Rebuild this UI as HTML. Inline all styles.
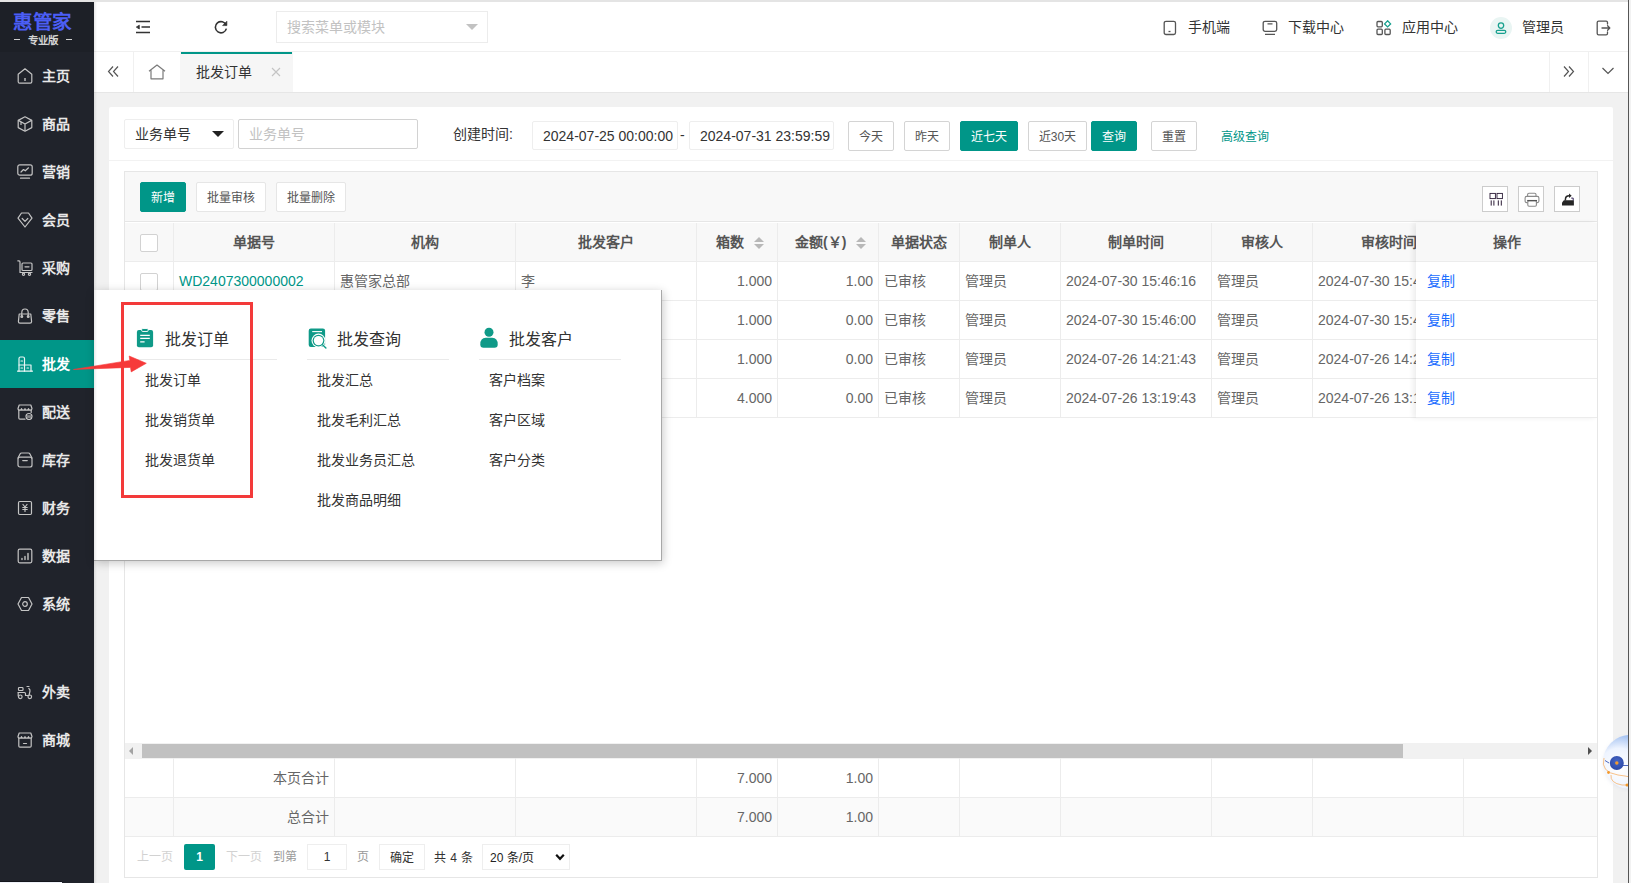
<!DOCTYPE html>
<html lang="zh-CN">
<head>
<meta charset="utf-8">
<style>
*{box-sizing:border-box;margin:0;padding:0}
html,body{width:1631px;height:883px;overflow:hidden;background:#f1f1f1;font-family:"Liberation Sans",sans-serif;font-size:14px;color:#666;position:relative}
.a{position:absolute;white-space:nowrap}
svg{display:block}
#topline{left:0;top:0;width:1631px;height:2px;background:#e4e4e4}
#side{left:0;top:2px;width:94px;height:881px;background:#20232b}
#logo{left:0;top:0;width:94px;height:50px;background:#1d2027}
.mi{position:absolute;left:0;width:94px;height:48px;color:#e8e8e8;font-weight:bold}
.mi.on{background:#009688;color:#fff}
.mi .ic{position:absolute;left:17px;top:16px;width:16px;height:16px}
.mi .tx{position:absolute;left:42px;top:0;line-height:48px;font-size:14px}
#hdr{left:94px;top:2px;width:1534px;height:50px;background:#fff;border-bottom:1px solid #f0f0f0}
#tabs{left:94px;top:52px;width:1534px;height:41px;background:#fff;border-bottom:1px solid #e6e6e6}
.btn{top:121px;height:30px;border:1px solid #d4d4d4;background:#fff;color:#555;font-size:12px;line-height:30px;text-align:center;border-radius:2px}
.btn.pri{background:#009688;border-color:#009688;color:#fff}
.tbtn{top:182px;height:30px;border:1px solid #e6e6e6;background:#fff;color:#555;font-size:12px;line-height:31px;text-align:center;border-radius:2px}
.tbtn.pri{background:#009688;border-color:#009688;color:#fff}
.ibox{top:186px;width:26px;height:26px;border:1px solid #ccc;background:#fff}
.ibox svg{position:absolute;left:0;top:0}
.th{top:223px;height:38px;line-height:38px;text-align:center;font-weight:bold;color:#555;font-size:14px}
.td{height:38px;line-height:38px;font-size:14px;color:#666}
.chk{width:18px;height:18px;border:1px solid #d2d2d2;border-radius:2px;background:#fff}
.pg{top:844px;line-height:26px;font-size:12px}
.pt{top:326px;line-height:28px;font-size:16px;color:#333}
.pi{line-height:20px;font-size:14px;color:#333}
</style>
</head>
<body>
<div id="topline" class="a"></div>
<!-- SIDEBAR -->
<div id="side" class="a">
  <div id="logo" class="a">
    <div class="a" style="left:13px;top:9px;width:62px;height:22px;color:#4b5ef6;font-weight:900;font-size:19.5px;line-height:22px;letter-spacing:-0.5px;white-space:nowrap">惠管家</div>
    <div class="a" style="left:13px;top:32px;width:60px;height:12px;color:#d4d4d4;font-size:10.5px;line-height:12px;text-align:center;font-weight:bold">专业版</div>
    <div class="a" style="left:14px;top:37px;width:6px;height:1px;background:#cfcfcf"></div>
    <div class="a" style="left:66px;top:37px;width:6px;height:1px;background:#cfcfcf"></div>
  </div>
</div>
<div class="mi a" style="top:52px"><svg class="ic" viewBox="0 0 16 16" fill="none" stroke="#c4c4c4" stroke-width="1.2" stroke-linejoin="round"><path d="M1.2 6.3 L8 0.8 L14.8 6.3 V13.8 Q14.8 15.2 13.4 15.2 H2.6 Q1.2 15.2 1.2 13.8 Z"/><path d="M8 10 V13" stroke-width="1.4"/></svg><span class="tx">主页</span></div>
<div class="mi a" style="top:100px"><svg class="ic" viewBox="0 0 16 16" fill="none" stroke="#c4c4c4" stroke-width="1.2" stroke-linejoin="round"><path d="M8 0.8 L14.8 4.4 V11.6 L8 15.2 L1.2 11.6 V4.4 Z"/><path d="M1.4 4.4 L8 8 L14.6 4.4 M8 8 V15 M4 6 V9"/></svg><span class="tx">商品</span></div>
<div class="mi a" style="top:148px"><svg class="ic" viewBox="0 0 16 16" fill="none" stroke="#c4c4c4" stroke-width="1.2" stroke-linejoin="round" stroke-linecap="round"><rect x="0.8" y="0.8" width="14.4" height="10.4" rx="2"/><path d="M4 8 L6.5 5.5 L8.3 6.8 L11.5 3.8 M3.5 14.2 H12.5"/></svg><span class="tx">营销</span></div>
<div class="mi a" style="top:196px"><svg class="ic" viewBox="0 0 16 16" fill="none" stroke="#c4c4c4" stroke-width="1.2" stroke-linejoin="round" stroke-linecap="round"><path d="M4.5 1 H11.5 L15 6.2 L8 15 L1 6.2 Z"/><path d="M5.2 6.5 L8 9.3 L10.8 6.5"/></svg><span class="tx">会员</span></div>
<div class="mi a" style="top:244px"><svg class="ic" viewBox="0 0 16 16" fill="none" stroke="#c4c4c4" stroke-width="1.2" stroke-linejoin="round" stroke-linecap="round"><path d="M0.8 0.8 H2 Q3 0.8 3 2 V12.5 H15"/><rect x="5" y="3" width="10" height="7.5" rx="1"/><path d="M8 6.8 H12"/><circle cx="6.5" cy="14.3" r="1.1"/><circle cx="12.5" cy="14.3" r="1.1"/></svg><span class="tx">采购</span></div>
<div class="mi a" style="top:292px"><svg class="ic" viewBox="0 0 16 16" fill="none" stroke="#c4c4c4" stroke-width="1.2" stroke-linejoin="round" stroke-linecap="round"><path d="M2.2 6 H13.8 L14.6 13.6 Q14.6 15.2 13 15.2 H3 Q1.4 15.2 1.4 13.6 Z"/><path d="M4.8 8.5 V4.6 Q4.8 1 8 1 Q11.2 1 11.2 4.6 V8.5"/><circle cx="4.8" cy="8.6" r="0.9"/><circle cx="11.2" cy="8.6" r="0.9"/></svg><span class="tx">零售</span></div>
<div class="mi on a" style="top:340px"><svg class="ic" viewBox="0 0 16 16" fill="none" stroke="#e8f6f4" stroke-width="1.2" stroke-linejoin="round" stroke-linecap="round"><path d="M0.5 15.2 H15.5"/><path d="M2 15.2 V2.5 Q2 1 3.5 1 H6 Q7.5 1 7.5 2.5 V15.2"/><path d="M7.5 9 H14 V15.2 M2 9 H7.5"/><path d="M4 5 H5.5 M4 12 H5.5 M10 12 H11.5"/></svg><span class="tx">批发</span></div>
<div class="mi a" style="top:388px"><svg class="ic" viewBox="0 0 16 16" fill="none" stroke="#c4c4c4" stroke-width="1.2" stroke-linejoin="round" stroke-linecap="round"><path d="M1 4.5 L2.2 1 H13.8 L15 4.5 Q15 6.2 13.2 6.2 Q11.5 6.2 11.5 4.6 Q11.5 6.2 9.7 6.2 Q8 6.2 8 4.6 Q8 6.2 6.3 6.2 Q4.5 6.2 4.5 4.6 Q4.5 6.2 2.8 6.2 Q1 6.2 1 4.5 Z"/><path d="M1.8 6.2 V14 Q1.8 15.2 3 15.2 H8"/><path d="M14.2 6.2 V8.5"/><circle cx="12" cy="12.5" r="3"/><path d="M11 11.5 V13.5 M13 11.5 V13.5"/></svg><span class="tx">配送</span></div>
<div class="mi a" style="top:436px"><svg class="ic" viewBox="0 0 16 16" fill="none" stroke="#c4c4c4" stroke-width="1.2" stroke-linejoin="round" stroke-linecap="round"><path d="M1 6 L3.2 1.8 Q3.6 1 4.5 1 H11.5 Q12.4 1 12.8 1.8 L15 6"/><rect x="1" y="5.2" width="14" height="9.8" rx="2"/><path d="M5.8 8.6 H10.2" stroke-width="1.4"/></svg><span class="tx">库存</span></div>
<div class="mi a" style="top:484px"><svg class="ic" viewBox="0 0 16 16" fill="none" stroke="#c4c4c4" stroke-width="1.2" stroke-linejoin="round" stroke-linecap="round"><rect x="1.5" y="1.5" width="13" height="13" rx="1.2"/><path d="M6 4.5 L8 7 L10 4.5 M8 7 V11.5 M5.8 7.5 H10.2 M5.8 9.5 H10.2"/></svg><span class="tx">财务</span></div>
<div class="mi a" style="top:532px"><svg class="ic" viewBox="0 0 16 16" fill="none" stroke="#c4c4c4" stroke-width="1.2" stroke-linejoin="round" stroke-linecap="round"><rect x="1.2" y="1.2" width="13.6" height="13.6" rx="1.5"/><path d="M5 11.5 V10.5 M8 11.5 V8.5 M11 11.5 V5.5" stroke-width="1.4"/></svg><span class="tx">数据</span></div>
<div class="mi a" style="top:580px"><svg class="ic" viewBox="0 0 16 16" fill="none" stroke="#c4c4c4" stroke-width="1.2" stroke-linejoin="round"><path d="M4.5 1.5 H11.5 L15 8 L11.5 14.5 H4.5 L1 8 Z"/><circle cx="8" cy="8" r="2.3"/></svg><span class="tx">系统</span></div>
<div class="mi a" style="top:668px"><svg class="ic" viewBox="0 0 16 16" fill="none" stroke="#c4c4c4" stroke-width="1.2" stroke-linejoin="round" stroke-linecap="round"><rect x="1.5" y="3.5" width="4.5" height="3" rx="0.8"/><path d="M1 8.5 H7.5 Q8.5 8.5 8.5 9.5 V11.5 H12 L13 7 Q13.2 5.5 11.8 4.5 M10 2.5 H12"/><circle cx="3.3" cy="12.8" r="1.8"/><circle cx="12.8" cy="12.8" r="1.8"/><path d="M1.2 12 V9"/></svg><span class="tx">外卖</span></div>
<div class="mi a" style="top:716px"><svg class="ic" viewBox="0 0 16 16" fill="none" stroke="#c4c4c4" stroke-width="1.2" stroke-linejoin="round" stroke-linecap="round"><path d="M1 4.5 L2.2 1 H13.8 L15 4.5 Q15 6.2 13.2 6.2 Q11.5 6.2 11.5 4.6 Q11.5 6.2 9.7 6.2 Q8 6.2 8 4.6 Q8 6.2 6.3 6.2 Q4.5 6.2 4.5 4.6 Q4.5 6.2 2.8 6.2 Q1 6.2 1 4.5 Z"/><path d="M1.8 6.2 V14 Q1.8 15.2 3 15.2 H13 Q14.2 15.2 14.2 14 V6.2"/><path d="M6.5 11.5 H9.5"/></svg><span class="tx">商城</span></div>
<div class="a" style="left:0;top:881px;width:62px;height:1px;background:#13151b"></div><div class="a" style="left:0;top:882px;width:62px;height:1px;background:#eef1f8"></div>

<!-- HEADER -->
<div id="hdr" class="a"></div>
<svg class="a" style="left:135px;top:20px" width="16" height="14" viewBox="0 0 16 14" fill="none" stroke="#333" stroke-width="1.5"><path d="M1 1.6 H15 M1 12.6 H15 M6.5 7.1 H15"/><path d="M1.3 7.1 L4.3 5.2 V9 Z" fill="#333" stroke-width="0.8"/></svg>
<svg class="a" style="left:214px;top:20px" width="14" height="14" viewBox="0 0 14 14" fill="none" stroke="#333" stroke-width="1.6"><path d="M12.2 5.2 A5.6 5.6 0 1 0 12.4 8.6"/><path d="M12.9 1.2 V5.6 H8.6 Z" fill="#333" stroke-width="0.6"/></svg>
<div class="a" style="left:276px;top:11px;width:212px;height:32px;border:1px solid #ececec;background:#fff"></div>
<div class="a" style="left:287px;top:11px;height:32px;line-height:32px;color:#c2c2c2;font-size:14px">搜索菜单或模块</div>
<div class="a" style="left:466px;top:24px;width:0;height:0;border-left:6px solid transparent;border-right:6px solid transparent;border-top:6px solid #c2c2c2"></div>

<svg class="a" style="left:1163px;top:20px" width="14" height="16" viewBox="0 0 14 16" fill="none" stroke="#555" stroke-width="1.3"><rect x="1.2" y="1.3" width="11.3" height="13.2" rx="1.8"/><path d="M5.5 11.5 H7.5"/></svg>
<div class="a" style="left:1188px;top:12px;line-height:30px;color:#333;font-size:14px">手机端</div>
<svg class="a" style="left:1262px;top:20px" width="16" height="16" viewBox="0 0 16 16" fill="none" stroke="#555" stroke-width="1.3"><rect x="1.2" y="1.3" width="13.5" height="10" rx="1.8"/><path d="M5.5 3.8 H10.5 M3 14.3 H13" /></svg>
<div class="a" style="left:1288px;top:12px;line-height:30px;color:#333;font-size:14px">下载中心</div>
<svg class="a" style="left:1376px;top:20px" width="16" height="16" viewBox="0 0 16 16" fill="none" stroke="#555" stroke-width="1.3"><rect x="1" y="1.5" width="5.3" height="5.3" rx="1"/><rect x="1" y="9.2" width="5.3" height="5.3" rx="1"/><rect x="8.9" y="9.2" width="5.3" height="5.3" rx="1"/><path d="M11.6 0.8 L14.6 3.9 L11.6 6.9 L8.6 3.9 Z" stroke="#16a08e"/></svg>
<div class="a" style="left:1402px;top:12px;line-height:30px;color:#333;font-size:14px">应用中心</div>
<div class="a" style="left:1490px;top:17px;width:22px;height:22px;border-radius:11px;background:#e9f5f3"></div>
<svg class="a" style="left:1494px;top:21px" width="14" height="14" viewBox="0 0 14 14" fill="none" stroke="#16a08e" stroke-width="1.3"><circle cx="7" cy="4.6" r="2.7"/><rect x="2.2" y="9.3" width="9.6" height="3" rx="1.5"/></svg>
<div class="a" style="left:1522px;top:12px;line-height:30px;color:#333;font-size:14px">管理员</div>
<svg class="a" style="left:1596px;top:20px" width="15" height="16" viewBox="0 0 15 16" fill="none" stroke="#555" stroke-width="1.3" stroke-linejoin="round" stroke-linecap="round"><path d="M11.5 4 V2.6 Q11.5 1.2 10.1 1.2 H2.6 Q1.2 1.2 1.2 2.6 V13.4 Q1.2 14.8 2.6 14.8 H10.1 Q11.5 14.8 11.5 13.4 V12"/><path d="M6 8 H13.6 M11.6 5.8 L13.8 8 L11.6 10.2"/></svg>

<!-- TABS -->
<div id="tabs" class="a"></div>
<div class="a" style="left:133px;top:52px;width:1px;height:40px;background:#f0f0f0"></div>
<svg class="a" style="left:107px;top:65px" width="13" height="13" viewBox="0 0 13 13" fill="none" stroke="#555" stroke-width="1.2"><path d="M6 1.5 L1.5 6.5 L6 11.5 M11 1.5 L6.5 6.5 L11 11.5"/></svg>
<svg class="a" style="left:148px;top:64px" width="18" height="16" viewBox="0 0 18 16" fill="none" stroke="#7a7a7a" stroke-width="1.2" stroke-linejoin="round"><path d="M1 7.2 L9 1 L17 7.2 M3 5.8 V14.8 H15 V5.8"/></svg>
<div class="a" style="left:180px;top:52px;width:113px;height:40px;background:#f6f6f6"></div>
<div class="a" style="left:181px;top:52px;width:111px;height:2px;background:#009688"></div>
<div class="a" style="left:196px;top:54px;line-height:36px;color:#333;font-size:14px">批发订单</div>
<svg class="a" style="left:271px;top:67px" width="10" height="10" viewBox="0 0 10 10" fill="none" stroke="#c4c4c4" stroke-width="1.1"><path d="M1 1 L9 9 M9 1 L1 9"/></svg>
<div class="a" style="left:1549px;top:52px;width:1px;height:40px;background:#f0f0f0"></div>
<div class="a" style="left:1588px;top:52px;width:1px;height:40px;background:#f0f0f0"></div>
<svg class="a" style="left:1562px;top:65px" width="13" height="13" viewBox="0 0 13 13" fill="none" stroke="#555" stroke-width="1.2"><path d="M2 1.5 L6.5 6.5 L2 11.5 M7 1.5 L11.5 6.5 L7 11.5"/></svg>
<svg class="a" style="left:1601px;top:66px" width="14" height="10" viewBox="0 0 14 10" fill="none" stroke="#555" stroke-width="1.2"><path d="M1.5 2 L7 7.5 L12.5 2"/></svg>

<!-- CONTENT CARD -->
<div class="a" style="left:109px;top:107px;width:1504px;height:790px;background:#fff;border-radius:2px"></div>
<div class="a" style="left:109px;top:160px;width:1504px;height:1px;background:#f2f2f2"></div>
<!-- filter row -->
<div class="a" style="left:124px;top:119px;width:110px;height:30px;border:1px solid #eee;background:#fff;border-radius:2px"></div>
<div class="a" style="left:135px;top:119px;line-height:30px;color:#333;font-size:14px">业务单号</div>
<div class="a" style="left:212px;top:131px;width:0;height:0;border-left:6px solid transparent;border-right:6px solid transparent;border-top:6.5px solid #222"></div>
<div class="a" style="left:238px;top:119px;width:180px;height:30px;border:1px solid #d2d2d2;background:#fff;border-radius:2px"></div>
<div class="a" style="left:249px;top:119px;line-height:30px;color:#c2c2c2;font-size:14px">业务单号</div>
<div class="a" style="left:453px;top:119px;line-height:30px;color:#333;font-size:14px">创建时间:</div>
<div class="a" style="left:532px;top:121px;width:146px;height:29px;border:1px solid #eee;background:#fff;border-radius:2px"></div>
<div class="a" style="left:543px;top:122px;line-height:29px;color:#333;font-size:14px">2024-07-25 00:00:00</div>
<div class="a" style="left:680px;top:121px;line-height:29px;color:#333;font-size:14px">-</div>
<div class="a" style="left:689px;top:121px;width:145px;height:29px;border:1px solid #eee;background:#fff;border-radius:2px"></div>
<div class="a" style="left:700px;top:122px;line-height:29px;color:#333;font-size:14px">2024-07-31 23:59:59</div>
<div class="btn a" style="left:848px;width:46px">今天</div>
<div class="btn a" style="left:904px;width:46px">昨天</div>
<div class="btn pri a" style="left:960px;width:58px">近七天</div>
<div class="btn a" style="left:1028px;width:59px">近30天</div>
<div class="btn pri a" style="left:1091px;width:46px">查询</div>
<div class="btn a" style="left:1151px;width:46px">重置</div>
<div class="a" style="left:1221px;top:122px;line-height:30px;color:#009688;font-size:12px">高级查询</div>

<!-- TABLE BOX -->
<div class="a" style="left:124px;top:171px;width:1474px;height:707px;border:1px solid #e6e6e6;background:#fff"></div>
<div class="a" style="left:125px;top:172px;width:1472px;height:50px;background:#f8f8f8;border-bottom:1px solid #e6e6e6"></div>
<div class="tbtn pri a" style="left:140px;width:46px">新增</div>
<div class="tbtn a" style="left:196px;width:70px">批量审核</div>
<div class="tbtn a" style="left:276px;width:70px">批量删除</div>
<div class="ibox a" style="left:1482px"><svg width="24" height="24" viewBox="0 0 24 24" fill="none" stroke="#2a1a35" stroke-width="0.9"><rect x="7" y="6.4" width="5.4" height="5.2"/><rect x="14" y="6.4" width="5.4" height="5.2"/><path d="M8.2 13.4 V18.6 M10.9 13.4 V18.6 M15.3 13.4 V18.6 M18.3 13.4 V18.6" stroke-width="1"/></svg></div>
<div class="ibox a" style="left:1518px"><svg width="24" height="24" viewBox="0 0 24 24" fill="none" stroke="#8a8a8a" stroke-width="1.1"><path d="M8.6 9.4 V7.6 Q8.6 6.2 10 6.2 H15.6 Q17 6.2 17 7.6 V9.4"/><path d="M8.6 15.6 H7.6 Q6.1 15.6 6.1 14.1 V10.9 Q6.1 9.4 7.6 9.4 H18.4 Q19.9 9.4 19.9 10.9 V14.1 Q19.9 15.6 18.4 15.6 H17.4"/><rect x="8.8" y="13.6" width="8.6" height="5.6" rx="1.2"/><path d="M8.2 13.6 H18" stroke="#555" stroke-width="1.3"/></svg></div>
<div class="ibox a" style="left:1554px"><svg width="24" height="24" viewBox="0 0 24 24"><path d="M7 15.6 L8.9 13.3 H18.9 V18.5 H7 Z" fill="#262626"/><path d="M10.4 13.5 V12.4 Q10.4 8.7 14.3 8.7" fill="none" stroke="#262626" stroke-width="1.5"/><path d="M14 6.4 L16.7 8.7 L14 11 Z" fill="#262626"/><path d="M16.2 11.1 H18.2 V13.5" fill="none" stroke="#332255" stroke-width="1"/></svg></div>
<div class="a" style="left:125px;top:223px;width:1472px;height:38px;background:#f8f8f8"></div>
<div class="a" style="left:125px;top:261px;width:1472px;height:1px;background:#ececec"></div>
<div class="a" style="left:125px;top:300px;width:1472px;height:1px;background:#ececec"></div>
<div class="a" style="left:125px;top:339px;width:1472px;height:1px;background:#ececec"></div>
<div class="a" style="left:125px;top:378px;width:1472px;height:1px;background:#ececec"></div>
<div class="a" style="left:125px;top:417px;width:1472px;height:1px;background:#ececec"></div>
<div class="a" style="left:173px;top:223px;width:1px;height:195px;background:#ececec"></div>
<div class="a" style="left:334px;top:223px;width:1px;height:195px;background:#ececec"></div>
<div class="a" style="left:515px;top:223px;width:1px;height:195px;background:#ececec"></div>
<div class="a" style="left:696px;top:223px;width:1px;height:195px;background:#ececec"></div>
<div class="a" style="left:777px;top:223px;width:1px;height:195px;background:#ececec"></div>
<div class="a" style="left:878px;top:223px;width:1px;height:195px;background:#ececec"></div>
<div class="a" style="left:959px;top:223px;width:1px;height:195px;background:#ececec"></div>
<div class="a" style="left:1060px;top:223px;width:1px;height:195px;background:#ececec"></div>
<div class="a" style="left:1211px;top:223px;width:1px;height:195px;background:#ececec"></div>
<div class="a" style="left:1312px;top:223px;width:1px;height:195px;background:#ececec"></div>
<div class="chk a" style="left:140px;top:234px"></div>
<div class="th a" style="left:173px;width:161px">单据号</div>
<div class="th a" style="left:334px;width:181px">机构</div>
<div class="th a" style="left:515px;width:181px">批发客户</div>
<div class="th a" style="left:716px;text-align:left">箱数</div>
<div class="th a" style="left:795px;text-align:left">金额(￥)</div>
<div class="a" style="left:754px;top:237px;width:0;height:0;border-left:5px solid transparent;border-right:5px solid transparent;border-bottom:5px solid #b8b8b8"></div>
<div class="a" style="left:754px;top:244px;width:0;height:0;border-left:5px solid transparent;border-right:5px solid transparent;border-top:5px solid #b8b8b8"></div>
<div class="a" style="left:856px;top:237px;width:0;height:0;border-left:5px solid transparent;border-right:5px solid transparent;border-bottom:5px solid #b8b8b8"></div>
<div class="a" style="left:856px;top:244px;width:0;height:0;border-left:5px solid transparent;border-right:5px solid transparent;border-top:5px solid #b8b8b8"></div>
<div class="th a" style="left:878px;width:81px">单据状态</div>
<div class="th a" style="left:959px;width:101px">制单人</div>
<div class="th a" style="left:1060px;width:151px">制单时间</div>
<div class="th a" style="left:1211px;width:101px">审核人</div>
<div class="th a" style="left:1361px;text-align:left">审核时间</div>
<div class="chk a" style="left:140px;top:273px"></div>
<div class="td a" style="left:179px;top:262px;color:#009688">WD2407300000002</div>
<div class="td a" style="left:340px;top:262px">惠管家总部</div>
<div class="td a" style="left:521px;top:262px">李</div>
<div class="td a" style="left:697px;width:75px;text-align:right;top:262px">1.000</div>
<div class="td a" style="left:778px;width:95px;text-align:right;top:262px">1.00</div>
<div class="td a" style="left:884px;top:262px">已审核</div>
<div class="td a" style="left:965px;top:262px">管理员</div>
<div class="td a" style="left:1066px;top:262px">2024-07-30 15:46:16</div>
<div class="td a" style="left:1217px;top:262px">管理员</div>
<div class="td a" style="left:1318px;top:262px">2024-07-30 15:46:16</div>
<div class="chk a" style="left:140px;top:312px"></div>
<div class="td a" style="left:179px;top:301px;color:#009688">WD2407300000001</div>
<div class="td a" style="left:340px;top:301px">惠管家总部</div>
<div class="td a" style="left:521px;top:301px">王</div>
<div class="td a" style="left:697px;width:75px;text-align:right;top:301px">1.000</div>
<div class="td a" style="left:778px;width:95px;text-align:right;top:301px">0.00</div>
<div class="td a" style="left:884px;top:301px">已审核</div>
<div class="td a" style="left:965px;top:301px">管理员</div>
<div class="td a" style="left:1066px;top:301px">2024-07-30 15:46:00</div>
<div class="td a" style="left:1217px;top:301px">管理员</div>
<div class="td a" style="left:1318px;top:301px">2024-07-30 15:46:00</div>
<div class="chk a" style="left:140px;top:351px"></div>
<div class="td a" style="left:179px;top:340px;color:#009688">WD2407260000002</div>
<div class="td a" style="left:340px;top:340px">惠管家总部</div>
<div class="td a" style="left:521px;top:340px">张</div>
<div class="td a" style="left:697px;width:75px;text-align:right;top:340px">1.000</div>
<div class="td a" style="left:778px;width:95px;text-align:right;top:340px">0.00</div>
<div class="td a" style="left:884px;top:340px">已审核</div>
<div class="td a" style="left:965px;top:340px">管理员</div>
<div class="td a" style="left:1066px;top:340px">2024-07-26 14:21:43</div>
<div class="td a" style="left:1217px;top:340px">管理员</div>
<div class="td a" style="left:1318px;top:340px">2024-07-26 14:21:43</div>
<div class="chk a" style="left:140px;top:390px"></div>
<div class="td a" style="left:179px;top:379px;color:#009688">WD2407260000001</div>
<div class="td a" style="left:340px;top:379px">惠管家总部</div>
<div class="td a" style="left:521px;top:379px">赵</div>
<div class="td a" style="left:697px;width:75px;text-align:right;top:379px">4.000</div>
<div class="td a" style="left:778px;width:95px;text-align:right;top:379px">0.00</div>
<div class="td a" style="left:884px;top:379px">已审核</div>
<div class="td a" style="left:965px;top:379px">管理员</div>
<div class="td a" style="left:1066px;top:379px">2024-07-26 13:19:43</div>
<div class="td a" style="left:1217px;top:379px">管理员</div>
<div class="td a" style="left:1318px;top:379px">2024-07-26 13:19:43</div>
<div class="a" style="left:1416px;top:223px;width:181px;height:195px;background:#fff;box-shadow:-3px 0 5px rgba(0,0,0,0.07)"></div>
<div class="a" style="left:1416px;top:223px;width:181px;height:38px;background:#f8f8f8"></div>
<div class="a" style="left:1416px;top:261px;width:181px;height:1px;background:#ececec"></div>
<div class="a" style="left:1416px;top:300px;width:181px;height:1px;background:#ececec"></div>
<div class="a" style="left:1416px;top:339px;width:181px;height:1px;background:#ececec"></div>
<div class="a" style="left:1416px;top:378px;width:181px;height:1px;background:#ececec"></div>
<div class="a" style="left:1416px;top:417px;width:181px;height:1px;background:#ececec"></div>
<div class="th a" style="left:1416px;width:181px">操作</div>
<div class="td a" style="left:1427px;top:262px;color:#1a6dff">复制</div>
<div class="td a" style="left:1427px;top:301px;color:#1a6dff">复制</div>
<div class="td a" style="left:1427px;top:340px;color:#1a6dff">复制</div>
<div class="td a" style="left:1427px;top:379px;color:#1a6dff">复制</div>
<div class="a" style="left:125px;top:743px;width:1472px;height:16px;background:#f1f1f1"></div>
<div class="a" style="left:142px;top:744px;width:1261px;height:14px;background:#c1c1c1"></div>
<div class="a" style="left:129px;top:747px;width:0;height:0;border-top:4px solid transparent;border-bottom:4px solid transparent;border-right:4px solid #a3a3a3"></div>
<div class="a" style="left:1588px;top:747px;width:0;height:0;border-top:4px solid transparent;border-bottom:4px solid transparent;border-left:4px solid #505050"></div>
<div class="a" style="left:125px;top:797px;width:1472px;height:39px;background:#fafafa"></div>
<div class="a" style="left:125px;top:797px;width:1472px;height:1px;background:#ececec"></div>
<div class="a" style="left:125px;top:836px;width:1472px;height:1px;background:#ececec"></div>
<div class="a" style="left:173px;top:758px;width:1px;height:78px;background:#ececec"></div>
<div class="a" style="left:334px;top:758px;width:1px;height:78px;background:#ececec"></div>
<div class="a" style="left:515px;top:758px;width:1px;height:78px;background:#ececec"></div>
<div class="a" style="left:696px;top:758px;width:1px;height:78px;background:#ececec"></div>
<div class="a" style="left:777px;top:758px;width:1px;height:78px;background:#ececec"></div>
<div class="a" style="left:878px;top:758px;width:1px;height:78px;background:#ececec"></div>
<div class="a" style="left:959px;top:758px;width:1px;height:78px;background:#ececec"></div>
<div class="a" style="left:1060px;top:758px;width:1px;height:78px;background:#ececec"></div>
<div class="a" style="left:1211px;top:758px;width:1px;height:78px;background:#ececec"></div>
<div class="a" style="left:1312px;top:758px;width:1px;height:78px;background:#ececec"></div>
<div class="a" style="left:1463px;top:758px;width:1px;height:78px;background:#ececec"></div>
<div class="td a" style="left:174px;width:155px;text-align:right;top:759px">本页合计</div>
<div class="td a" style="left:174px;width:155px;text-align:right;top:798px">总合计</div>
<div class="td a" style="left:697px;width:75px;text-align:right;top:759px">7.000</div>
<div class="td a" style="left:778px;width:95px;text-align:right;top:759px">1.00</div>
<div class="td a" style="left:697px;width:75px;text-align:right;top:798px">7.000</div>
<div class="td a" style="left:778px;width:95px;text-align:right;top:798px">1.00</div>

<div class="pg a" style="left:137px;color:#d2d2d2">上一页</div>
<div class="a" style="left:184px;top:844px;width:31px;height:26px;background:#009688;border-radius:2px;color:#fff;font-size:12px;line-height:26px;text-align:center;font-weight:bold">1</div>
<div class="pg a" style="left:226px;color:#d2d2d2">下一页</div>
<div class="pg a" style="left:273px;color:#999">到第</div>
<div class="a" style="left:307px;top:844px;width:40px;height:26px;border:1px solid #eee;background:#fff;font-size:12px;line-height:24px;text-align:center;color:#333">1</div>
<div class="pg a" style="left:357px;color:#999">页</div>
<div class="a" style="left:379px;top:844px;width:46px;height:26px;border:1px solid #eee;background:#fff;font-size:12px;line-height:27px;text-align:center;color:#333">确定</div>
<div class="pg a" style="left:434px;color:#333;word-spacing:1px;top:845px">共 4 条</div>
<div class="a" style="left:482px;top:844px;width:88px;height:26px;border:1px solid #eee;background:#fff"></div>
<div class="a" style="left:490px;top:845px;line-height:26px;font-size:12px;color:#222">20 条/页</div>
<svg class="a" style="left:555px;top:853px" width="10" height="8" viewBox="0 0 10 8" fill="none" stroke="#111" stroke-width="2.2"><path d="M1.2 1.8 L5 5.8 L8.8 1.8"/></svg>
<!-- POPUP -->
<div class="a" style="left:94px;top:290px;width:568px;height:271px;background:#fff;border-right:1px solid #a8a8a8;border-bottom:1px solid #a8a8a8;box-shadow:1px 2px 9px rgba(0,0,0,0.22)"></div>
<!-- col1 -->
<svg class="a" style="left:136px;top:328px" width="18" height="20" viewBox="0 0 18 20"><rect x="0.9" y="2" width="16.2" height="17.3" rx="2" fill="#0f9a88"/><rect x="5.6" y="0.5" width="6.6" height="3" rx="1.2" fill="#0f9a88" stroke="#fff" stroke-width="0.9"/><path d="M4.2 7.4 H13.8 M4.2 10.4 H13.8 M4.2 13.9 H8.6" stroke="#fff" stroke-width="1.1"/></svg>
<div class="pt a" style="left:165px">批发订单</div>
<div class="a" style="left:135px;top:359px;width:142px;height:1px;background:#eaeaea"></div>
<div class="pi a" style="left:145px;top:370px">批发订单</div>
<div class="pi a" style="left:145px;top:410px">批发销货单</div>
<div class="pi a" style="left:145px;top:450px">批发退货单</div>
<!-- col2 -->
<svg class="a" style="left:308px;top:328px" width="20" height="21" viewBox="0 0 20 21"><rect x="0.7" y="0.6" width="16.4" height="18.4" rx="2.2" fill="#0f9a88"/><path d="M4.2 3.6 H14" stroke="#fff" stroke-width="1.1"/><path d="M15 17 L18 20" stroke="#fff" stroke-width="2.8" stroke-linecap="round"/><circle cx="10.5" cy="12.6" r="7" fill="#fff"/><circle cx="10.5" cy="12.6" r="5.9" fill="#0f9a88"/><circle cx="10.5" cy="12.6" r="4.7" fill="#fff"/><path d="M14.8 16.9 L17.9 20" stroke="#0f9a88" stroke-width="1.4" stroke-linecap="round"/></svg>
<div class="pt a" style="left:337px">批发查询</div>
<div class="a" style="left:307px;top:359px;width:142px;height:1px;background:#eaeaea"></div>
<div class="pi a" style="left:317px;top:370px">批发汇总</div>
<div class="pi a" style="left:317px;top:410px">批发毛利汇总</div>
<div class="pi a" style="left:317px;top:450px">批发业务员汇总</div>
<div class="pi a" style="left:317px;top:490px">批发商品明细</div>
<!-- col3 -->
<svg class="a" style="left:480px;top:327px" width="18" height="21" viewBox="0 0 18 21"><circle cx="9" cy="5.3" r="4.5" fill="#0f9a88"/><path d="M0.3 17.5 Q0.3 10.8 5.8 10.8 H12.2 Q17.7 10.8 17.7 17.5 Q17.7 20.7 14.5 20.7 H3.5 Q0.3 20.7 0.3 17.5 Z" fill="#0f9a88"/></svg>
<div class="pt a" style="left:509px">批发客户</div>
<div class="a" style="left:479px;top:359px;width:142px;height:1px;background:#eaeaea"></div>
<div class="pi a" style="left:489px;top:370px">客户档案</div>
<div class="pi a" style="left:489px;top:410px">客户区域</div>
<div class="pi a" style="left:489px;top:450px">客户分类</div>

<!-- red box -->
<div class="a" style="left:121px;top:302px;width:132px;height:196px;border:3px solid #f33a3a"></div>
<!-- red arrow -->
<svg class="a" style="left:60px;top:340px" width="100" height="40" viewBox="0 0 100 40"><path d="M13.4 29.5 L69.8 20.4 L69.2 16 L86.3 23.3 L71.2 31.9 L70.5 27.4 Z" fill="#f63a3a" stroke="#f63a3a" stroke-width="0.6" stroke-linejoin="round"/></svg>

<!-- robot -->
<div class="a" style="left:1613px;top:93px;width:15px;height:790px;background:#f1f1f1"></div>
<div class="a" style="left:1596px;top:728px;width:32px;height:64px;overflow:hidden">
 <svg width="32" height="64" viewBox="0 0 32 64"><defs>
 <radialGradient id="rg" cx="0.3" cy="0.62" r="0.75"><stop offset="0" stop-color="#ffffff"/><stop offset="0.5" stop-color="#eef4ff"/><stop offset="1" stop-color="#7ea8ea"/></radialGradient>
 <radialGradient id="eg" cx="0.5" cy="0.4" r="0.6"><stop offset="0" stop-color="#4668c8"/><stop offset="1" stop-color="#2c48a6"/></radialGradient>
 <filter id="bl" x="-0.3" y="-0.3" width="1.6" height="1.6"><feGaussianBlur stdDeviation="2"/></filter></defs>
 <circle cx="34" cy="35" r="26" fill="#c8cfe0" opacity="0.5" filter="url(#bl)"/>
 <circle cx="34" cy="34" r="27" fill="url(#rg)"/>
 <path d="M8 30 Q4 44 22 47 Q30 48 34 49 M15 47 Q14 55 26 57 H34" fill="none" stroke="#f8a650" stroke-width="0.8" opacity="0.85"/>
 <path d="M9 32.5 L13 35 M27 37.5 H33" stroke="#3a57b8" stroke-width="0.9"/>
 <circle cx="20.8" cy="35" r="7" fill="url(#eg)"/><circle cx="20.8" cy="35" r="1.7" fill="#f59a2d"/>
 <circle cx="12.5" cy="44.5" r="1.4" fill="#f59a2d"/><circle cx="31" cy="57" r="1.5" fill="#f59a2d"/>
 </svg>
</div>

<div class="a" style="left:94px;top:2px;width:3px;height:881px;background:linear-gradient(to right,rgba(0,0,0,0.09),rgba(0,0,0,0))"></div>
<!-- right edge -->
<div class="a" style="left:1628px;top:0;width:1px;height:883px;background:#555"></div>
<div class="a" style="left:1629px;top:0;width:2px;height:883px;background:#f2f2f2"></div>

</body>
</html>
